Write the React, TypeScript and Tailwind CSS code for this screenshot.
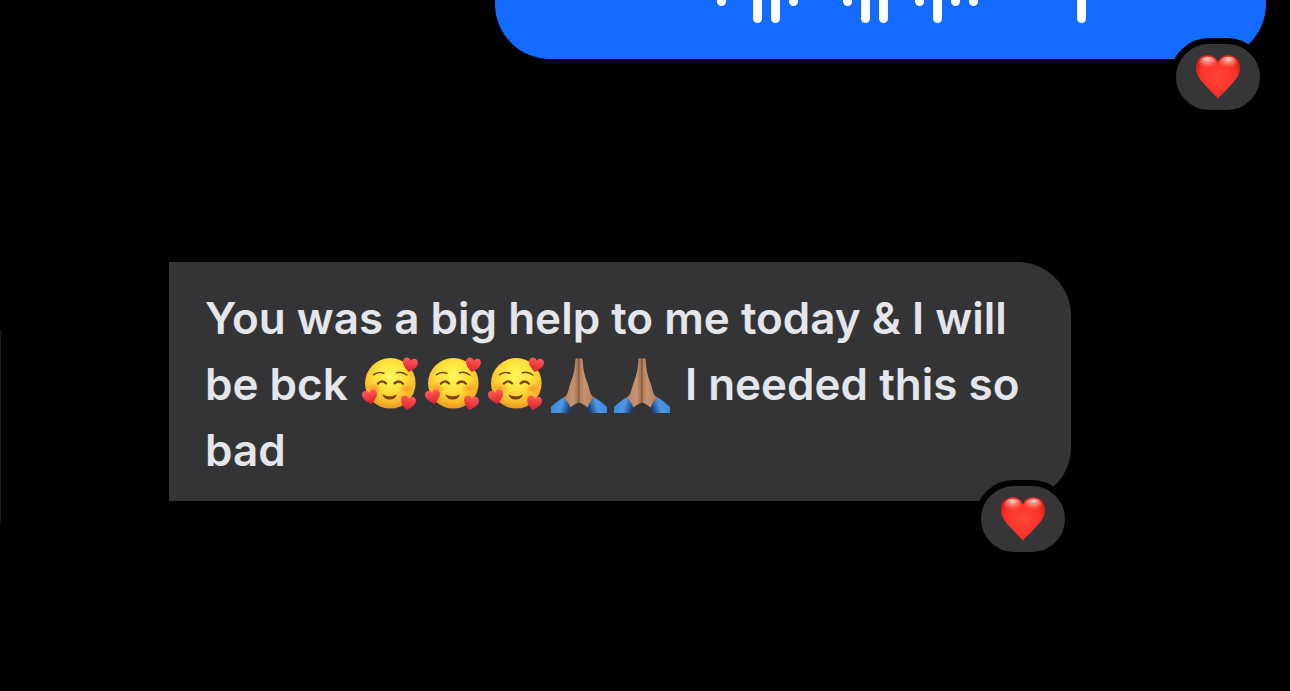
import { useId } from "react";
import type { ReactNode } from "react";

const TALL = "h-[23px]";
const SHORT = "h-[6px]";
const NONE = "h-0";

// Lower half of the voice message wave, one entry per bar
const WAVE_BARS = [
  SHORT, NONE, TALL, TALL, SHORT, NONE, NONE, SHORT, TALL, TALL, NONE,
  SHORT, TALL, SHORT, SHORT, NONE, NONE, NONE, NONE, NONE, TALL,
];

const SMALL_HEART =
  "M0 7.2C-2.2 5.4-7.4 1.8-7.5-2.5C-7.6-5.2-5.9-6.9-3.8-6.9C-2-6.9-.7-5.9 0-4.2C.7-5.9 2-6.9 3.8-6.9C5.9-6.9 7.6-5.2 7.5-2.5C7.4 1.8 2.2 5.4 0 7.2Z";

const FACE_HEARTS = [
  "translate(48 8) rotate(9)",
  "translate(8 40) rotate(-12)",
  "translate(46 46) rotate(12)",
];

function HeartIcon() {
  const id = useId();
  return (
    <svg viewBox="0 0 44 44" className="size-11" role="img" aria-label="Red heart">
      <defs>
        <radialGradient id={`${id}-fill`} cx="0.5" cy="0.5" r="0.58">
          <stop offset="0" stopColor="#ff4636" />
          <stop offset="0.7" stopColor="#fb3127" />
          <stop offset="1" stopColor="#d21a14" />
        </radialGradient>
        <radialGradient id={`${id}-shine`} cx="0.5" cy="0.2" r="0.75">
          <stop offset="0" stopColor="#ffe6e1" stopOpacity="0.95" />
          <stop offset="0.45" stopColor="#ffa195" stopOpacity="0.6" />
          <stop offset="1" stopColor="#ff5a48" stopOpacity="0" />
        </radialGradient>
      </defs>
      <path
        d="M22 44C20.5 41.5 16 37.5 10.5 31.5C4.5 25 0 20.5 0 12.5C0 5 5 0 11.7 0C16.5 0 20.3 3 22 7.6C23.7 3 27.5 0 32.3 0C39 0 44 5 44 12.5C44 20.5 39.5 25 33.5 31.5C28 37.5 23.5 41.5 22 44Z"
        fill={`url(#${id}-fill)`}
      />
      <ellipse cx="11.5" cy="8" rx="8.6" ry="6.6" fill={`url(#${id}-shine)`} />
      <ellipse cx="32.5" cy="8" rx="8.6" ry="6.6" fill={`url(#${id}-shine)`} />
    </svg>
  );
}

function SmilingHeartsFace() {
  const id = useId();
  return (
    <>
      <defs>
        <radialGradient id={`${id}-skin`} cx="0.5" cy="0.35" r="0.66">
          <stop offset="0" stopColor="#fff65a" />
          <stop offset="0.45" stopColor="#fee23c" />
          <stop offset="0.8" stopColor="#f9b82b" />
          <stop offset="1" stopColor="#e9921e" />
        </radialGradient>
        <radialGradient id={`${id}-blush`}>
          <stop offset="0" stopColor="#fb6a1e" stopOpacity="0.55" />
          <stop offset="1" stopColor="#fb8a1e" stopOpacity="0" />
        </radialGradient>
        <linearGradient id={`${id}-heart`} x1="0" y1="0" x2="0" y2="1">
          <stop offset="0" stopColor="#ff5a58" />
          <stop offset="1" stopColor="#dc1f2b" />
        </linearGradient>
      </defs>
      <circle cx="28.3" cy="26.3" r="25.3" fill={`url(#${id}-skin)`} />
      <ellipse cx="12.5" cy="31.5" rx="8" ry="6" fill={`url(#${id}-blush)`} />
      <ellipse cx="44.5" cy="31.5" rx="8" ry="6" fill={`url(#${id}-blush)`} />
      <g fill="none" stroke="#7a4309" strokeLinecap="round">
        <path d="M11.5 17.8Q15.5 14 21.8 16.2" strokeWidth="1.5" />
        <path d="M34.5 15.8Q40 14.2 44.8 18" strokeWidth="1.5" />
        <path d="M15.8 26.6Q20 22.4 24 26.4" strokeWidth="2.2" />
        <path d="M32.5 26.4Q37 22.4 41 26.8" strokeWidth="2.2" />
      </g>
      <path d="M20.7 37.2C24.5 40 31 40 34.7 37.2C34.2 44.4 21.2 44.4 20.7 37.2Z" fill="#7a4309" />
      {FACE_HEARTS.map((place) => (
        <path key={place} d={SMALL_HEART} transform={place} fill={`url(#${id}-heart)`} />
      ))}
    </>
  );
}

function FoldedHands() {
  const id = useId();
  return (
    <>
      <defs>
        <linearGradient id={`${id}-left`} x1="0" y1="0" x2="1" y2="0">
          <stop offset="0" stopColor="#b98260" />
          <stop offset="0.65" stopColor="#c59472" />
          <stop offset="1" stopColor="#9a6a4a" />
        </linearGradient>
        <linearGradient id={`${id}-right`} x1="0" y1="0" x2="1" y2="0">
          <stop offset="0" stopColor="#b07c5a" />
          <stop offset="0.35" stopColor="#c59472" />
          <stop offset="1" stopColor="#b27b57" />
        </linearGradient>
        <linearGradient id={`${id}-cuff-left`} x1="0" y1="0" x2="1" y2="0.25">
          <stop offset="0" stopColor="#3d85d6" />
          <stop offset="0.6" stopColor="#4b97e6" />
          <stop offset="1" stopColor="#1b3f78" />
        </linearGradient>
        <linearGradient id={`${id}-cuff-right`} x1="1" y1="0" x2="0" y2="0.25">
          <stop offset="0" stopColor="#3d85d6" />
          <stop offset="0.6" stopColor="#4b97e6" />
          <stop offset="1" stopColor="#1b3f78" />
        </linearGradient>
      </defs>
      <path d="M0 50C4 46 8 43 12.5 40.5L20.5 49.5L18 56H0Z" fill={`url(#${id}-cuff-left)`} />
      <path d="M56 50C52 46 48 43 43.5 40.5L35.5 49.5L38 56H56Z" fill={`url(#${id}-cuff-right)`} />
      <path
        d="M24.3 3C24.3 .8 28 .8 28 3V45.5C25.5 46.5 22 48 19.5 50.5C18 46.5 15.5 43.5 12.5 40.8C17 38.5 17 33 19.5 26C22.5 18.5 23.8 13 24.3 3Z"
        fill={`url(#${id}-left)`}
      />
      <path
        d="M31.7 3C31.7 .8 28 .8 28 3V45.5C30.5 46.5 34 48 36.5 50.5C38 46.5 40.5 43.5 43.5 40.8C39 38.5 39 33 36.5 26C33.5 18.5 32.2 13 31.7 3Z"
        fill={`url(#${id}-right)`}
      />
      <path d="M28 3V45.5" stroke="#7a4e33" strokeWidth="1" />
    </>
  );
}

function Emoji({ label, children }: { label: string; children: ReactNode }) {
  return (
    <svg
      viewBox="0 0 56 56"
      role="img"
      aria-label={label}
      className="mr-[4px] ml-[3px] inline-block size-14 align-[-13px]"
    >
      {children}
    </svg>
  );
}

function Reaction() {
  return (
    <button
      type="button"
      className="absolute right-0 -bottom-[57px] box-content flex h-[66px] w-[84px] items-center justify-center rounded-full border-6 border-black bg-[#363638]"
    >
      <HeartIcon />
    </button>
  );
}

export default function App() {
  return (
    <main className="relative min-h-screen bg-black font-['Inter','Liberation_Sans',sans-serif]">
      {/* Edge line */}
      <div className="absolute top-[330px] left-0 h-[193px] w-px bg-[#1c1c1c]" />

      {/* Outgoing voice message */}
      <div className="flex justify-end pr-6">
        <div className="relative flex h-[59px] w-full max-w-[771px] items-start justify-end gap-[9px] rounded-b-[55px] bg-[#146bff] pr-[180px]">
          {WAVE_BARS.map((height, i) => (
            <span key={i} className={`w-[9px] rounded-b-full bg-white ${height}`} />
          ))}
          <Reaction />
        </div>
      </div>

      {/* Incoming message */}
      <div className="mt-[203px] pr-6 pl-[169px]">
        <div className="relative max-w-[902px] rounded-r-[54px] bg-[#343436] px-9 pt-[23px] pb-[18px]">
          <p className="text-[44px] leading-[66px] font-semibold text-[#e4e6eb]">
            You was a big help to me today &amp; I will be bck{" "}
            <Emoji label="Smiling face with hearts"><SmilingHeartsFace /></Emoji>
            <Emoji label="Smiling face with hearts"><SmilingHeartsFace /></Emoji>
            <Emoji label="Smiling face with hearts"><SmilingHeartsFace /></Emoji>
            <Emoji label="Folded hands"><FoldedHands /></Emoji>
            <Emoji label="Folded hands"><FoldedHands /></Emoji>{" "}
            I needed this so bad
          </p>
          <Reaction />
        </div>
      </div>
    </main>
  );
}
